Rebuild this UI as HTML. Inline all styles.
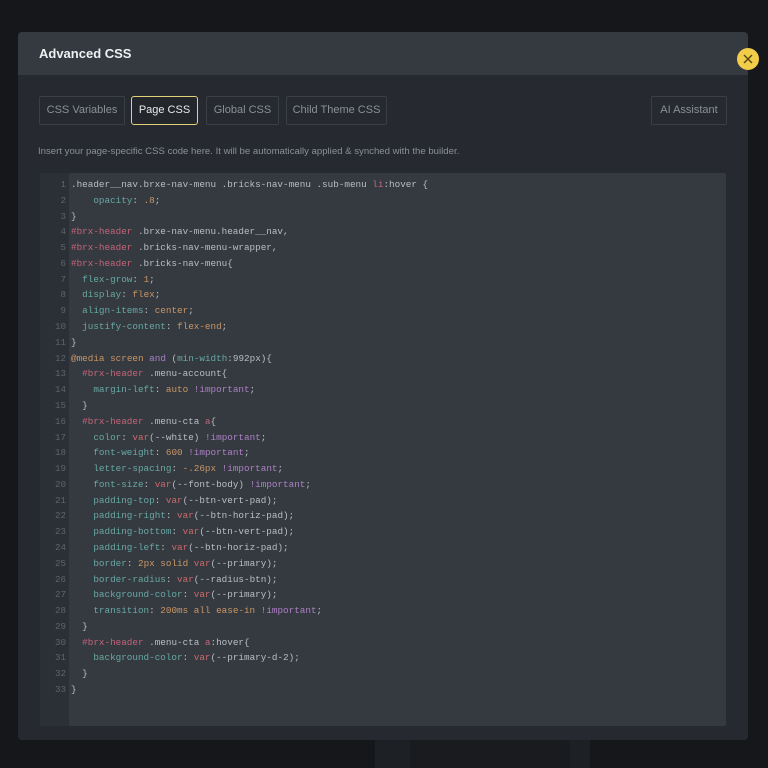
<!DOCTYPE html><html><head><style>
body{margin:0;width:768px;height:768px;background:#15171b;position:relative;overflow:hidden;font-family:"Liberation Sans",sans-serif}
.bg1{position:absolute;left:375px;top:740px;width:215px;height:28px;background:#1d2024}
.bg2{position:absolute;left:410px;top:740px;width:160px;height:28px;background:#191b1f}
.modal{position:absolute;left:18px;top:32px;width:730px;height:708px;background:#262a30;border-radius:4px;overflow:hidden}
.hd{height:43px;background:#353a40;color:#eef0f2;font-weight:bold;font-size:13px;line-height:43px;padding-left:21px}
.tab{position:absolute;top:64px;height:27px;border:1px solid #3a3f45;border-radius:2px;color:#8a9097;font-size:11px;line-height:27px;text-align:center;box-sizing:content-box}
.tab.act{border:1.5px solid #e3d17a;color:#e8eaec;background:#23272c;border-radius:3px}
.desc{position:absolute;left:20px;top:114px;font-size:9.6px;color:#8a9097}
.gut{position:absolute;left:22px;top:141px;width:29px;height:553px;background:#2b3036}
.ed{position:absolute;left:51px;top:141px;width:657px;height:553px;background:#353a40;border-radius:2px}
pre{margin:0;position:absolute;left:0;top:4px;font-family:"Liberation Mono",monospace;font-size:9.3px;line-height:15.78px;color:#b9bec4}
.ln{position:absolute;left:22px;top:145px;width:26px;text-align:right;font-family:"Liberation Mono",monospace;font-size:9.2px;line-height:15.78px;color:#5d646c}
.p{color:#67a8a4}.i{color:#c4647a}.v{color:#c99666}.r{color:#c96a6a}.k{color:#ad80c6}
.x{position:absolute;left:737px;top:48px;width:22px;height:22px;border-radius:50%;background:#f2cd4a}
</style></head><body>
<div class="bg1"></div><div class="bg2"></div>
<div class="modal">
<div class="hd">Advanced CSS</div>
<div class="tab" style="left:21px;width:84px">CSS Variables</div>
<div class="tab act" style="left:113px;width:65px">Page CSS</div>
<div class="tab" style="left:188px;width:71px">Global CSS</div>
<div class="tab" style="left:268px;width:99px">Child Theme CSS</div>
<div class="tab" style="left:633px;width:74px">AI Assistant</div>
<div class="desc">Insert your page-specific CSS code here. It will be automatically applied &amp; synched with the builder.</div>
<div class="gut"></div>
<div class="ln">1<br>2<br>3<br>4<br>5<br>6<br>7<br>8<br>9<br>10<br>11<br>12<br>13<br>14<br>15<br>16<br>17<br>18<br>19<br>20<br>21<br>22<br>23<br>24<br>25<br>26<br>27<br>28<br>29<br>30<br>31<br>32<br>33</div>
<div class="ed"><pre style="left:2px">.header__nav.brxe-nav-menu .bricks-nav-menu .sub-menu <span class="i">li</span>:hover {
    <span class="p">opacity</span>: <span class="v">.8</span>;
}
<span class="i">#brx-header</span> .brxe-nav-menu.header__nav,
<span class="i">#brx-header</span> .bricks-nav-menu-wrapper,
<span class="i">#brx-header</span> .bricks-nav-menu{
  <span class="p">flex-grow</span>: <span class="v">1</span>;
  <span class="p">display</span>: <span class="v">flex</span>;
  <span class="p">align-items</span>: <span class="v">center</span>;
  <span class="p">justify-content</span>: <span class="v">flex-end</span>;
}
<span class="v">@media</span> <span class="v">screen</span> <span class="k">and</span> (<span class="p">min-width</span>:992px){
  <span class="i">#brx-header</span> .menu-account{
    <span class="p">margin-left</span>: <span class="v">auto</span> <span class="k">!important</span>;
  }
  <span class="i">#brx-header</span> .menu-cta <span class="i">a</span>{
    <span class="p">color</span>: <span class="r">var</span>(--white) <span class="k">!important</span>;
    <span class="p">font-weight</span>: <span class="v">600</span> <span class="k">!important</span>;
    <span class="p">letter-spacing</span>: <span class="v">-.26px</span> <span class="k">!important</span>;
    <span class="p">font-size</span>: <span class="r">var</span>(--font-body) <span class="k">!important</span>;
    <span class="p">padding-top</span>: <span class="r">var</span>(--btn-vert-pad);
    <span class="p">padding-right</span>: <span class="r">var</span>(--btn-horiz-pad);
    <span class="p">padding-bottom</span>: <span class="r">var</span>(--btn-vert-pad);
    <span class="p">padding-left</span>: <span class="r">var</span>(--btn-horiz-pad);
    <span class="p">border</span>: <span class="v">2px solid</span> <span class="r">var</span>(--primary);
    <span class="p">border-radius</span>: <span class="r">var</span>(--radius-btn);
    <span class="p">background-color</span>: <span class="r">var</span>(--primary);
    <span class="p">transition</span>: <span class="v">200ms all ease-in</span> <span class="k">!important</span>;
  }
  <span class="i">#brx-header</span> .menu-cta <span class="i">a</span>:hover{
    <span class="p">background-color</span>: <span class="r">var</span>(--primary-d-2);
  }
}</pre></div>
</div>
<div class="x"><svg width="22" height="22"><path d="M7 7L15 15M15 7L7 15" stroke="#5a4a10" stroke-width="1.5"/></svg></div>
</body></html>
